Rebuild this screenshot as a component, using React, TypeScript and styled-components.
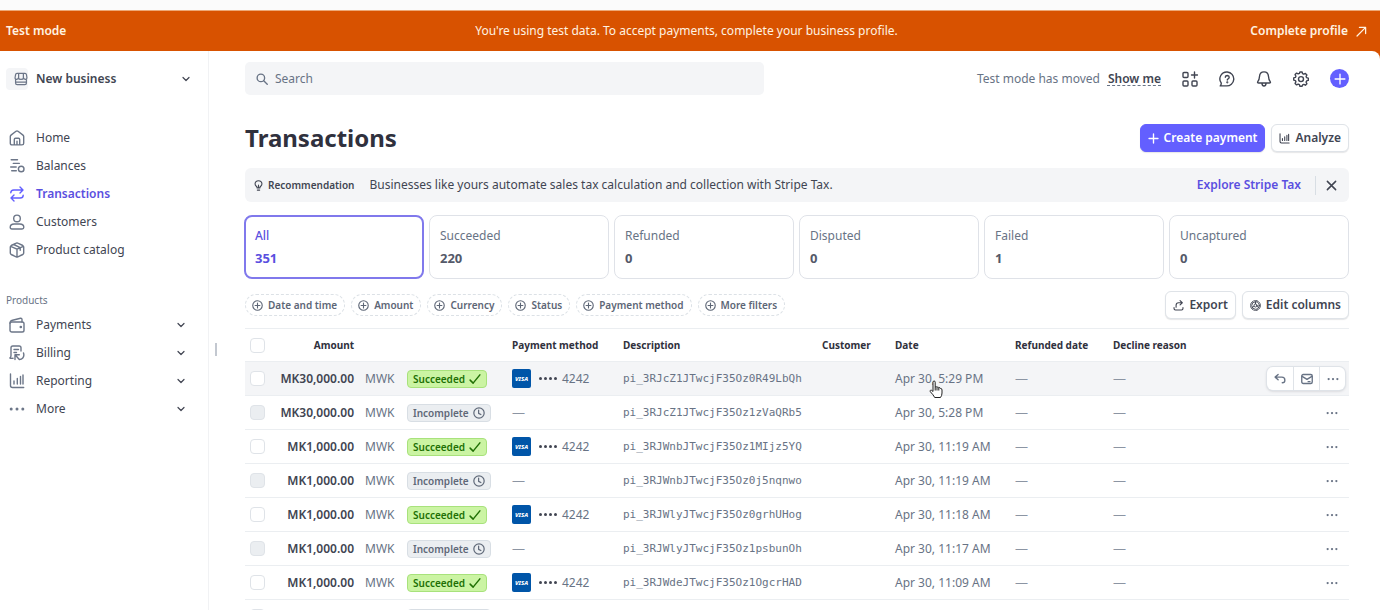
import React from 'react';
import styled, { createGlobalStyle, css } from 'styled-components';

const c = {
  text: '#414552',
  strong: '#30313d',
  muted: '#687385',
  icon: '#6c7688',
  brand: '#635fff',
  brandText: '#5a4fe0',
  line: '#ebeef1',
  fill: '#f4f5f7',
  orange: '#d85200',
};

const GlobalStyle = createGlobalStyle`
  *, *::before, *::after { box-sizing: border-box; }
  body { margin: 0; background: #fff; color: ${c.text}; font: 400 12px/20px "Noto Sans", "Open Sans", sans-serif; }
  button, input { font: inherit; color: inherit; }
  button { cursor: pointer; }
  a { color: inherit; text-decoration: none; }
  svg { display: block; flex: none; }
`;

/* ---------- icons ---------- */

const Svg = styled.svg<{ $size?: number; $weight?: number }>`
  width: ${p => p.$size ?? 16}px;
  height: ${p => p.$size ?? 16}px;
  fill: none;
  stroke: currentColor;
  stroke-width: ${p => p.$weight ?? 1.4};
  stroke-linecap: round;
  stroke-linejoin: round;
`;

type IconProps = { size?: number; weight?: number };

const icon = (body: React.ReactNode) => ({ size, weight }: IconProps) => (
  <Svg viewBox="0 0 16 16" $size={size} $weight={weight} aria-hidden="true">{body}</Svg>
);

const dots = (
  <g fill="currentColor" stroke="none">
    <circle cx="2.2" cy="8" r="1.5" /><circle cx="8" cy="8" r="1.5" /><circle cx="13.8" cy="8" r="1.5" />
  </g>
);

const StoreIcon = icon(<path d="M3.400 1.500h9.200q1.400 0 1.600 1.400l.6 3.700q0 1.900-1.700 1.900-1.700 0-2.100-1.700-.6 1.700-3 1.700T5 6.800Q4.600 8.500 2.900 8.500 1.200 8.500 1.200 6.600l.6-3.700q.2-1.400 1.600-1.400zM5.300 6.500V1.700M10.700 6.500V1.700M1.800 9v3.700q0 1.800 1.800 1.800h8.800q1.800 0 1.800-1.800V9M2 11.500h12" />);
const HomeIcon = icon(<path d="M1.300 6.500Q1.300 5.700 2 5.100L7 1.300q1-.7 2 0l5 3.800q.7.600.7 1.400v6.700q0 1.700-1.700 1.700H3q-1.700 0-1.700-1.700zM5.300 14.700V9.500q0-1.200 1.200-1.200h3q1.200 0 1.200 1.200v5.200M8 14.700v-3.500" />);
const BalancesIcon = icon(<><path d="M2.200 1.800h6.300M4.300 5.400h6M1.700 9h5.500M2.700 12.800h4.600" /><circle cx="12.200" cy="11" r="2.800" /></>);
const TransferIcon = icon(<path d="M11 1l3 3-3 3M13.500 4H4.800Q1.800 4 1.800 6.800M5 9l-3 3 3 3M2.500 12h8.700q3 0 3-2.800" />);
const CustomerIcon = icon(<><circle cx="8" cy="4.400" r="3.300" /><path d="M1.200 13.300q0-3.300 4-3.300h5.600q4 0 4 3.300 0 1.700-1.700 1.700H2.900q-1.700 0-1.700-1.700z" /></>);
const BoxIcon = icon(<path d="M7.200 1.200q.8-.4 1.600 0l5 2.300q.9.500.9 1.500v6q0 1-.9 1.500l-5 2.300q-.8.400-1.600 0l-5-2.300q-.9-.5-.9-1.500V5q0-1 .9-1.500zM1.700 4.300L8 7.200l6.300-2.900M8 7.200v7.500M4.700 2.500l6.500 3.100v2.600" />);
const WalletIcon = icon(<><rect x="1" y="5" width="14" height="10" rx="1.800" /><path d="M1 6.300Q1 3.800 3.500 3.200l8-1.900q1.500-.3 1.500 1.200V5" /><circle cx="11.800" cy="10" r=".6" fill="currentColor" /></>);
const BillingIcon = icon(<path d="M12 6V2.800Q12 1 10.200 1H3.800Q2 1 2 2.800V10.500q0 1.800-1.200 2.500 1 .7 3.200.2M5 4.500h4.500M5 7.500h2.500M10.300 9.800H6v4.700M6.300 10.100l4 4.300M14.500 8q1 3-.7 5-1.300 1.500-3.300 1.500" />);
const ReportIcon = icon(<path d="M1.500 1v11.500q0 2 2 2h11.200M5 8v3M8.300 5.500V11M11.500 3.500V11M14 2v9" />);
const MoreIcon = icon(dots);
const ChevronIcon = icon(<path d="M2 5l6 6 6-6" />);
const SearchIcon = icon(<><circle cx="6.500" cy="6.500" r="5" /><path d="M10.300 10.300L15 15" /></>);
const AppsIcon = icon(<><rect x="1" y="1.500" width="5" height="5" rx="1" /><rect x="1" y="10" width="5" height="5" rx="1" /><rect x="10" y="10" width="5" height="5" rx="1" /><path d="M12.500 1v6M9.500 4h6" /></>);
const HelpIcon = icon(<><path d="M8.300 1a6.900 6.900 0 1 1-1 13.900H1.200q1.300-1.300 1-3A6.900 6.900 0 0 1 8.300 1z" /><path d="M6.300 6.200Q6.500 4.500 8.300 4.500q1.900.1 1.900 1.700 0 1-1.100 1.600-.8.400-.8 1.200" /><circle cx="8.300" cy="11.300" r=".4" fill="currentColor" /></>);
const BellIcon = icon(<path d="M8 .900q4.200 0 4.500 4.600.2 3.300 1.700 5.100.8 1.400-.9 1.400H2.700q-1.700 0-.9-1.400 1.500-1.800 1.700-5.100Q3.800.9 8 .9zM6 12.300q0 2.700 2 2.700t2-2.700" />);
const GearIcon = icon(<><path d="M6.900 1h2.200l.5 1.700 1.200.5 1.600-.8 1.500 1.500-.8 1.600.5 1.200 1.700.5v2.200l-1.700.5-.5 1.200.8 1.600-1.500 1.500-1.600-.8-1.200.5L9.100 15.300H6.900l-.5-1.700-1.200-.5-1.600.8-1.500-1.500.8-1.600-.5-1.200L.700 9.100V6.900l1.700-.5.500-1.200-.8-1.600 1.500-1.500 1.600.8 1.200-.5z" /><circle cx="8" cy="8.100" r="2.500" /></>);
const PlusIcon = icon(<path d="M8 1.500v13M1.500 8h13" />);
const ArrowOutIcon = icon(<path d="M1.500 14.500L14 2M5 2h9v9" />);
const BulbIcon = icon(<path d="M6 11.500Q6 10 4.500 8.700 3 7.300 3 5.500 3.300 1 8 1t5 4.500q0 1.800-1.500 3.200Q10 10 10 11.500zM6.300 14.700h3.400M8 11V7.500" />);
const CloseIcon = icon(<path d="M2 2l12 12M14 2L2 14" />);
const AddCircleIcon = icon(<><circle cx="8" cy="8" r="6.900" /><path d="M8 4.500v7M4.500 8h7" /></>);
const ExportIcon = icon(<path d="M1.500 11v1.500q0 2 2 2h9q2 0 2-2V11M4.500 10.500V7.500q0-3.500 3.500-3.500h5M10.300 1L13.500 4l-3.200 3" />);
const CogIcon = icon(<><circle cx="8" cy="8" r="5.500" /><circle cx="8" cy="8" r="7.200" strokeDasharray="2.300 1.500" /><circle cx="8" cy="8" r="2.200" /><path d="M8 5.500v-3M10.200 9.300l2.600 1.500M5.800 9.300l-2.600 1.500" /></>);
const CheckIcon = icon(<path d="M1.500 9.500l4 4L14.500 2.500" />);
const ClockIcon = icon(<><circle cx="8" cy="8" r="6.900" /><path d="M7.500 4v4.500l3 1.500" /></>);
const ReplyIcon = icon(<path d="M5.500 2L1.500 5.500l4 3.500M2 5.500h8.500q4 0 4 4 0 3.500-3.500 3.500" />);
const MailIcon = icon(<><rect x="1" y="2" width="14" height="12" rx="2" /><path d="M1.500 4.500L8 8.500l6.500-4M12 11.500H9.500" /></>);

/* ---------- frame ---------- */

const Frame = styled.div`
  display: flex;
  flex-direction: column;
  height: 100vh;
  padding-top: 10px;
  background: #fbfbfb;
`;

const Banner = styled.div`
  display: grid;
  grid-template-columns: 1fr auto 1fr;
  align-items: center;
  flex: none;
  height: 41px;
  padding: 0 13px 0 6px;
  background: ${c.orange};
  border-top: 1px solid #eda876;
  color: #fff3e2;
`;

const BannerLabel = styled.strong`
  font-weight: 600;
`;

const BannerLink = styled.a`
  display: flex;
  align-items: center;
  justify-self: end;
  gap: 8px;
  font-weight: 600;
`;

const Body = styled.div`
  display: flex;
  flex: 1;
  min-height: 0;
  background: linear-gradient(${c.orange}, ${c.orange}) top / 100% 8px no-repeat #fff;
`;

const Workspace = styled.div`
  display: flex;
  flex: 1;
  min-width: 0;
  background: #fff;
  border-top-right-radius: 8px;
  overflow: hidden;
`;

const Sidebar = styled.aside`
  flex: none;
  width: 209px;
  padding-top: 11px;
  border-right: 1px solid #f1f2f4;
`;

const Account = styled.button`
  display: flex;
  align-items: center;
  gap: 8px;
  width: 100%;
  height: 34px;
  padding: 0 18px 0 6px;
  border: 0;
  background: none;
  font-weight: 600;
  color: ${c.text};
  svg:last-child { margin-left: auto; }
`;

const AccountMark = styled.span`
  display: grid;
  place-items: center;
  width: 22px;
  height: 22px;
  border-radius: 4px;
  background: ${c.fill};
  color: ${c.icon};
`;

const NavList = styled.ul<{ $gap?: boolean }>`
  margin: ${p => (p.$gap ? '28px 0 0' : '0')};
  padding: 0;
  list-style: none;
`;

const NavLink = styled.a<{ $active?: boolean }>`
  display: flex;
  align-items: center;
  gap: 11px;
  height: 28px;
  padding: 0 23px 0 9px;
  color: ${p => (p.$active ? c.brandText : c.text)};
  font-weight: ${p => (p.$active ? 600 : 400)};
  > svg:first-child { color: ${p => (p.$active ? c.brand : c.icon)}; }
  > svg:nth-of-type(2) { margin-left: auto; }
`;

const NavHeading = styled.h2`
  margin: 26px 0 1px;
  padding-left: 6px;
  font-size: 10px;
  line-height: 20px;
  font-weight: 400;
  color: ${c.muted};
`;

const Resizer = styled.div`
  align-self: center;
  flex: none;
  width: 2px;
  height: 13px;
  margin: 38px 0 0 6px;
  background: #c3c8d0;
`;

const Main = styled.main`
  flex: 1;
  min-width: 0;
  overflow: hidden;
`;

const Content = styled.div`
  padding: 11px 31px 0 28px;
`;

/* ---------- header ---------- */

const TopBar = styled.header`
  display: flex;
  align-items: center;
  justify-content: space-between;
  height: 33px;
`;

const SearchBox = styled.label`
  display: flex;
  align-items: center;
  gap: 7px;
  width: 47%;
  height: 33px;
  padding: 0 11px;
  border-radius: 5px;
  background: ${c.fill};
  color: ${c.muted};
  input {
    flex: 1;
    min-width: 0;
    padding: 0;
    border: 0;
    outline: 0;
    background: none;
  }
  input::placeholder { color: ${c.muted}; opacity: 1; }
`;

const Tools = styled.div`
  display: flex;
  align-items: center;
  gap: 21px;
  color: ${c.text};
`;

const Notice = styled.span`
  display: flex;
  gap: 8px;
  color: ${c.muted};
`;

const NoticeLink = styled.a`
  color: ${c.text};
  font-weight: 600;
  text-decoration: underline dashed ${c.muted} 1px;
  text-underline-offset: 2px;
`;

const IconButton = styled.button<{ $filled?: boolean }>`
  display: grid;
  place-items: center;
  padding: 0;
  border: 0;
  background: none;
  ${p => p.$filled && css`
    width: 19px;
    height: 19px;
    border-radius: 50%;
    background: ${c.brand};
    color: #fff;
  `}
`;

const TitleRow = styled.div`
  display: flex;
  align-items: center;
  justify-content: space-between;
  margin-top: 23px;
  height: 40px;
`;

const Title = styled.h1`
  margin: 0;
  font-size: 24px;
  line-height: 36px;
  font-weight: 700;
  color: ${c.strong};
`;

const ButtonRow = styled.div`
  display: flex;
  gap: 6px;
`;

const Button = styled.button<{ $primary?: boolean }>`
  display: flex;
  align-items: center;
  gap: 5px;
  height: 28px;
  padding: 0 7px;
  border: 1px solid ${p => (p.$primary ? c.brand : '#dfe3e8')};
  border-radius: 6px;
  background: ${p => (p.$primary ? c.brand : '#fff')};
  box-shadow: 0 1px 1px rgba(48, 49, 61, 0.12);
  color: ${p => (p.$primary ? '#fff' : c.text)};
  font-weight: 600;
  white-space: nowrap;
`;

const Tip = styled.section`
  display: flex;
  align-items: center;
  height: 34px;
  margin-top: 10px;
  padding: 0 12px 0 8px;
  border-radius: 6px;
  background: ${c.fill};
`;

const TipLabel = styled.strong`
  display: flex;
  align-items: center;
  gap: 4px;
  margin-right: 15px;
  font-size: 10px;
  font-weight: 600;
`;

const TipLink = styled.a`
  margin-left: auto;
  padding-right: 14px;
  color: ${c.brandText};
  font-weight: 600;
`;

const TipClose = styled(IconButton)`
  height: 19px;
  padding-left: 10px;
  border-left: 1px solid #d8dee4;
`;

/* ---------- summary ---------- */

const Cards = styled.div`
  display: grid;
  grid-template-columns: repeat(6, 1fr);
  gap: 5px;
  margin: 13px 0 0 -1px;
`;

const Card = styled.button<{ $active?: boolean }>`
  display: flex;
  flex-direction: column;
  justify-content: center;
  gap: 2px;
  height: 64px;
  padding: 0 ${p => (p.$active ? 9 : 10)}px;
  border: ${p => (p.$active ? '2px solid #8079ec' : '1px solid #dfe2e8')};
  border-radius: 8px;
  background: #fff;
  color: ${p => (p.$active ? c.brandText : c.muted)};
  font-weight: ${p => (p.$active ? 500 : 400)};
  text-align: left;
  strong {
    color: ${p => (p.$active ? c.brandText : '#545969')};
    font-size: 13px;
    font-weight: 700;
  }
`;

const FilterRow = styled.div`
  display: flex;
  align-items: center;
  justify-content: space-between;
  height: 28px;
  margin-top: 12px;
`;

const Chips = styled.div`
  display: flex;
  gap: 6px;
`;

const Chip = styled.button`
  display: flex;
  align-items: center;
  gap: 5px;
  height: 22px;
  padding: 0 7px 0 6px;
  border: 1px dashed #dce1e6;
  border-radius: 11px;
  background: #fff;
  color: #5d6676;
  font-size: 10px;
  font-weight: 600;
  line-height: 20px;
  white-space: nowrap;
`;

/* ---------- table ---------- */

const Table = styled.table`
  width: 100%;
  margin-top: 9px;
  border-collapse: collapse;
  table-layout: fixed;
  border-top: 1px solid ${c.line};
  th, td { padding: 0; text-align: left; white-space: nowrap; }
  th { height: 33px; font-size: 10px; font-weight: 700; color: ${c.strong}; }
`;

const Row = styled.tr<{ $hover?: boolean }>`
  height: 34px;
  border-top: 1px solid ${c.line};
  background: ${p => (p.$hover ? c.fill : 'transparent')};
  color: ${c.muted};
`;

const Num = styled.td`
  && { text-align: right; color: ${c.text}; font-weight: 600; }
`;

const NumHead = styled.th`
  && { text-align: right; }
`;

const Check = styled.input`
  appearance: none;
  display: block;
  width: 15px;
  height: 15px;
  margin: 0 0 0 5px;
  border: 1px solid #dfe3e8;
  border-radius: 4px;
  background: #fff;
  &:disabled { background: #ebeef1; }
`;

const Badge = styled.span<{ $ok?: boolean }>`
  display: inline-flex;
  align-items: center;
  gap: 4px;
  height: 18px;
  padding: 0 5px;
  border: 1px solid ${p => (p.$ok ? '#a8e27c' : '#d8dee4')};
  border-radius: 4px;
  background: ${p => (p.$ok ? '#cbf4a3' : '#ebeef1')};
  color: ${p => (p.$ok ? '#217005' : '#5f6878')};
  font-size: 10px;
  font-weight: 600;
  line-height: 16px;
  vertical-align: middle;
  &:empty { width: 84px; }
`;

const PayCard = styled.span`
  display: flex;
  align-items: center;
  gap: 8px;
`;

const Visa = styled.span`
  display: grid;
  place-items: center;
  width: 19px;
  height: 19px;
  border-radius: 2px;
  background: #0055a8;
  color: #fff;
  font-size: 6px;
  line-height: 8px;
  font-weight: 800;
  font-style: italic;
`;

const CardDots = styled.span`
  display: flex;
  align-items: center;
  gap: 2px;
  i { width: 3px; height: 3px; border-radius: 50%; background: #414552; }
  i:last-of-type { margin-right: 3px; }
`;

const Dash = styled.span`
  font-size: 13px;
  color: #8c95a3;
`;

const Code = styled.code`
  font: 400 11px/20px "DejaVu Sans Mono", monospace;
`;

const DateText = styled.span`
  position: relative;
`;

const Pointer = styled.svg`
  position: absolute;
  left: 34px;
  top: 10px;
  width: 14px;
  height: 19px;
`;

const Actions = styled.div`
  display: flex;
  justify-content: flex-end;
  padding-right: 4px;
`;

const ActionGroup = styled.div`
  display: flex;
  height: 23px;
  border-radius: 6px;
  background: #fff;
  box-shadow: 0 0 0 1px #dfe3e8, 0 1px 3px rgba(48, 49, 61, 0.25);
`;

const ActionButton = styled(IconButton)`
  width: 26px;
  & + & { border-left: 1px solid #dfe3e8; }
`;

const nav = [
  { label: 'Home', Icon: HomeIcon },
  { label: 'Balances', Icon: BalancesIcon },
  { label: 'Transactions', Icon: TransferIcon, active: true },
  { label: 'Customers', Icon: CustomerIcon },
  { label: 'Product catalog', Icon: BoxIcon },
];

const products = [
  { label: 'Payments', Icon: WalletIcon },
  { label: 'Billing', Icon: BillingIcon },
  { label: 'Reporting', Icon: ReportIcon },
  { label: 'More', Icon: MoreIcon },
];

const cards = [
  ['All', '351'], ['Succeeded', '220'], ['Refunded', '0'], ['Disputed', '0'], ['Failed', '1'], ['Uncaptured', '0'],
];

const filters = ['Date and time', 'Amount', 'Currency', 'Status', 'Payment method', 'More filters'];

const columns = [22, 87, 11, 42, 105, 111, 199, 73, 120, 98];

const rows = [
  { amount: 'MK30,000.00', ok: true, id: 'pi_3RJcZ1JTwcjF35Oz0R49LbQh', date: 'Apr 30, 5:29 PM' },
  { amount: 'MK30,000.00', ok: false, id: 'pi_3RJcZ1JTwcjF35Oz1zVaQRb5', date: 'Apr 30, 5:28 PM' },
  { amount: 'MK1,000.00', ok: true, id: 'pi_3RJWnbJTwcjF35Oz1MIjz5YQ', date: 'Apr 30, 11:19 AM' },
  { amount: 'MK1,000.00', ok: false, id: 'pi_3RJWnbJTwcjF35Oz0j5nqnwo', date: 'Apr 30, 11:19 AM' },
  { amount: 'MK1,000.00', ok: true, id: 'pi_3RJWlyJTwcjF35Oz0grhUHog', date: 'Apr 30, 11:18 AM' },
  { amount: 'MK1,000.00', ok: false, id: 'pi_3RJWlyJTwcjF35Oz1psbunOh', date: 'Apr 30, 11:17 AM' },
  { amount: 'MK1,000.00', ok: true, id: 'pi_3RJWdeJTwcjF35Oz1OgcrHAD', date: 'Apr 30, 11:09 AM' },
];

function TransactionRow({ row, hover }: { row: (typeof rows)[number]; hover: boolean }) {
  return (
    <Row $hover={hover}>
      <td><Check type="checkbox" aria-label={`Select ${row.id}`} disabled={!row.ok} /></td>
      <Num>{row.amount}</Num>
      <td />
      <td>MWK</td>
      <td>
        <Badge $ok={row.ok}>
          {row.ok ? 'Succeeded' : 'Incomplete'}
          {row.ok ? <CheckIcon size={12} weight={2} /> : <ClockIcon size={12} weight={1.6} />}
        </Badge>
      </td>
      <td>
        {row.ok ? (
          <PayCard><Visa>VISA</Visa><CardDots><i /><i /><i /><i />4242</CardDots></PayCard>
        ) : <Dash>—</Dash>}
      </td>
      <td><Code>{row.id}</Code></td>
      <td />
      <td>
        <DateText>
          {row.date}
          {hover && (
            <Pointer viewBox="0 0 14 19" aria-hidden="true">
              <path d="M4 11.500V2.200Q4 1 5.100 1t1.100 1.200V7Q7 6.200 8 7.200q1.200-.7 1.800.5 1.400-.5 1.700.8 1.500-.2 1.500 1.500v3q0 2.500-1.500 4.500H5.700Q4.500 15 1.300 11.700q-.6-1 .3-1.500 1-.4 2.400 1.300z" fill="#fff" stroke="#222" strokeWidth="1" />
              <path d="M6.200 7v3.500M8 7.500v3M9.800 8v2.500" stroke="#222" strokeWidth="1" />
            </Pointer>
          )}
        </DateText>
      </td>
      <td><Dash>—</Dash></td>
      <td><Dash>—</Dash></td>
      <td>
        <Actions>
          {hover ? (
            <ActionGroup>
              <ActionButton aria-label="Refund"><ReplyIcon size={12} weight={1.8} /></ActionButton>
              <ActionButton aria-label="Send receipt"><MailIcon size={12} weight={1.8} /></ActionButton>
              <ActionButton aria-label="More actions"><MoreIcon size={12} /></ActionButton>
            </ActionGroup>
          ) : (
            <ActionButton aria-label="More actions"><MoreIcon size={12} /></ActionButton>
          )}
        </Actions>
      </td>
    </Row>
  );
}

/* Row whose data has not arrived yet: only the checkbox and an empty status badge. */
function PendingRow() {
  return (
    <Row>
      <td><Check type="checkbox" aria-label="Select transaction" disabled /></td>
      <td /><td /><td />
      <td><Badge /></td>
      <td colSpan={7} />
    </Row>
  );
}

export default function App() {
  return (
    <Frame>
      <GlobalStyle />
      <Banner>
        <BannerLabel>Test mode</BannerLabel>
        <span>You're using test data. To accept payments, complete your business profile.</span>
        <BannerLink href="#profile">Complete profile <ArrowOutIcon size={11} weight={1.8} /></BannerLink>
      </Banner>
      <Body>
        <Workspace>
          <Sidebar>
            <Account>
              <AccountMark><StoreIcon size={14} /></AccountMark>
              New business
              <ChevronIcon size={8} weight={2.4} />
            </Account>
            <nav aria-label="Main">
              <NavList $gap>
                {nav.map(({ label, Icon, active }) => (
                  <li key={label}><NavLink href="#nav" $active={active}><Icon />{label}</NavLink></li>
                ))}
              </NavList>
              <NavHeading>Products</NavHeading>
              <NavList>
                {products.map(({ label, Icon }) => (
                  <li key={label}><NavLink href="#products"><Icon />{label}<ChevronIcon size={8} weight={2.4} /></NavLink></li>
                ))}
              </NavList>
            </nav>
          </Sidebar>
          <Resizer />
          <Main>
            <Content>
              <TopBar>
                <SearchBox>
                  <SearchIcon size={12} weight={1.8} />
                  <input type="search" placeholder="Search" aria-label="Search" />
                </SearchBox>
                <Tools>
                  <Notice>Test mode has moved <NoticeLink href="#show">Show me</NoticeLink></Notice>
                  <IconButton aria-label="Apps"><AppsIcon /></IconButton>
                  <IconButton aria-label="Help"><HelpIcon /></IconButton>
                  <IconButton aria-label="Notifications"><BellIcon /></IconButton>
                  <IconButton aria-label="Settings"><GearIcon /></IconButton>
                  <IconButton aria-label="Create" $filled><PlusIcon size={12} weight={1.8} /></IconButton>
                </Tools>
              </TopBar>
              <TitleRow>
                <Title>Transactions</Title>
                <ButtonRow>
                  <Button $primary><PlusIcon size={11} weight={2} />Create payment</Button>
                  <Button><ReportIcon size={11} weight={1.6} />Analyze</Button>
                </ButtonRow>
              </TitleRow>
              <Tip>
                <TipLabel><BulbIcon size={11} weight={1.6} />Recommendation</TipLabel>
                <span>Businesses like yours automate sales tax calculation and collection with Stripe Tax.</span>
                <TipLink href="#tax">Explore Stripe Tax</TipLink>
                <TipClose aria-label="Dismiss"><CloseIcon size={11} weight={2.2} /></TipClose>
              </Tip>
              <Cards>
                {cards.map(([label, value], i) => (
                  <Card key={label} $active={i === 0}><span>{label}</span><strong>{value}</strong></Card>
                ))}
              </Cards>
              <FilterRow>
                <Chips>
                  {filters.map(f => <Chip key={f}><AddCircleIcon size={11} weight={1.6} />{f}</Chip>)}
                </Chips>
                <ButtonRow>
                  <Button><ExportIcon size={11} weight={1.6} />Export</Button>
                  <Button><CogIcon size={11} weight={1.4} />Edit columns</Button>
                </ButtonRow>
              </FilterRow>
              <Table>
                <colgroup>
                  {columns.map((w, i) => <col key={i} width={w} />)}
                  <col /><col />
                </colgroup>
                <thead>
                  <tr>
                    <th><Check type="checkbox" aria-label="Select all" /></th>
                    <NumHead>Amount</NumHead>
                    <th /><th /><th />
                    <th>Payment method</th>
                    <th>Description</th>
                    <th>Customer</th>
                    <th>Date</th>
                    <th>Refunded date</th>
                    <th>Decline reason</th>
                    <th />
                  </tr>
                </thead>
                <tbody>
                  {rows.map((row, i) => <TransactionRow key={row.id} row={row} hover={i === 0} />)}
                  <PendingRow />
                </tbody>
              </Table>
            </Content>
          </Main>
        </Workspace>
      </Body>
    </Frame>
  );
}
